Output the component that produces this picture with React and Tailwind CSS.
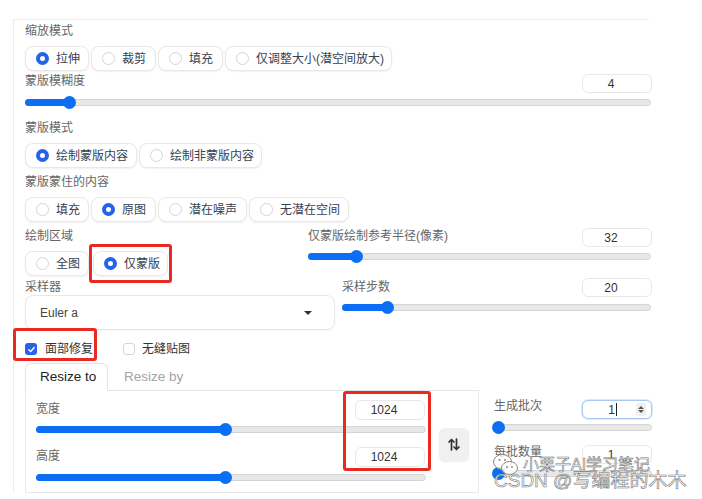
const font = "font-['Liberation_Sans','Noto_Sans_CJK_SC',sans-serif]";

function Radio({ label, checked, w }) {
  return (
    <div className={`flex h-[25px] shrink-0 items-center gap-[7px] overflow-hidden whitespace-nowrap rounded-lg border border-[#e8e8e8] bg-white pl-[10px] text-[12px] leading-[16px] text-[#374151] shadow-[0_1px_2px_rgba(0,0,0,0.06)] ${w}`}>
      {checked ? (
        <span className="h-[13px] w-[13px] shrink-0 rounded-full border-[4px] border-[#2563eb] bg-white" />
      ) : (
        <span className="h-[13px] w-[13px] shrink-0 rounded-full border border-[#d4d4d8] bg-white" />
      )}
      <span>{label}</span>
    </div>
  );
}

function Label({ children, className = "" }) {
  return <div className={`text-[12px] leading-[16px] text-[#666] ${className}`}>{children}</div>;
}

function NumBox({ value, className = "" }) {
  return (
    <div className={`flex h-[19px] w-[70px] items-center justify-center rounded-md border border-[#e8e8e8] bg-white pr-[12px] text-[12px] leading-[16px] text-[#333] ${className}`}>
      {value}
    </div>
  );
}

function Track({ fill, thumb }) {
  return (
    <div className="relative h-[13px] w-full">
      <div className="absolute left-0 right-0 top-[3px] h-[7px] rounded-full border border-[#d4d4d4] bg-[#e8e8e8]" />
      <div className={`absolute left-0 top-[3px] h-[7px] rounded-full bg-[#0b6ef3] ${fill}`} />
      <div className={`absolute top-0 h-[13px] w-[13px] rounded-full bg-[#0b6ef3] ${thumb}`} />
    </div>
  );
}

function RedBox({ className }) {
  return <div className={`pointer-events-none absolute rounded-[3px] border-[3px] border-[#e82a22] ${className}`} />;
}

export default function App() {
  return (
    <div className={`relative h-[499px] w-[702px] overflow-hidden bg-white ${font}`}>
      <div className="ml-[13px] mt-[19px] w-[636px] border-l border-t border-[#ececec] pl-[11px]">
        <div className="w-[627px]">
          <Label className="mt-[3px]">缩放模式</Label>
          <div className="mt-[7px] flex gap-[2px]">
            <Radio label="拉伸" checked w="w-[64px]" />
            <Radio label="裁剪" w="w-[65px]" />
            <Radio label="填充" w="w-[65px]" />
            <Radio label="仅调整大小(潜空间放大)" w="w-[167px]" />
          </div>

          <div className="mt-[2px] flex items-start justify-between">
            <Label>蒙版模糊度</Label>
            <NumBox value="4" className="mt-[1px]" />
          </div>
          <div className="mt-[3px] w-[626px]">
            <Track fill="w-[44px]" thumb="left-[38px]" />
          </div>

          <Label className="mt-[11px]">蒙版模式</Label>
          <div className="mt-[7px] flex gap-[2px]">
            <Radio label="绘制蒙版内容" checked w="w-[112px]" />
            <Radio label="绘制非蒙版内容" w="w-[123px]" />
          </div>

          <Label className="mt-[6px]">蒙版蒙住的内容</Label>
          <div className="mt-[7px] flex gap-[2px]">
            <Radio label="填充" w="w-[64px]" />
            <Radio label="原图" checked w="w-[65px]" />
            <Radio label="潜在噪声" w="w-[89px]" />
            <Radio label="无潜在空间" w="w-[100px]" />
          </div>

          <div className="mt-[6px] flex">
            <div className="w-[283px]">
              <Label>绘制区域</Label>
              <div className="mt-[7px] flex gap-[4px]">
                <Radio label="全图" w="w-[64px]" />
                <Radio label="仅蒙版" checked w="w-[75px]" />
              </div>
            </div>
            <div className="w-[344px]">
              <div className="flex items-start justify-between">
                <Label>仅蒙版绘制参考半径(像素)</Label>
                <NumBox value="32" />
              </div>
              <div className="mt-[3px] w-[343px]">
                <Track fill="w-[48px]" thumb="left-[42px]" />
              </div>
            </div>
          </div>

          <div className="mt-[2px] flex">
            <div className="w-[310px]">
              <Label className="mt-[1px]">采样器</Label>
              <div className="flex h-[35px] items-center justify-between rounded-lg border border-[#e8e8e8] bg-white pl-[14px] pr-[22px] text-[12px] text-[#444] shadow-[0_1px_2px_rgba(0,0,0,0.04)]">
                <span>Euler a</span>
                <span className="h-0 w-0 border-x-[4px] border-t-[4px] border-x-transparent border-t-[#333]" />
              </div>
            </div>
            <div className="ml-[7px] w-[310px]">
              <div className="flex items-start justify-between">
                <Label className="mt-[1px]">采样步数</Label>
                <NumBox value="20" />
              </div>
              <div className="mt-[4px] w-[309px]">
                <Track fill="w-[45px]" thumb="left-[39px]" />
              </div>
            </div>
          </div>

          <div className="mt-[11px] flex h-[16px] items-center text-[12px] text-[#333]">
            <span className="flex h-[12px] w-[12px] items-center justify-center rounded-[3px] bg-[#2563eb]">
              <svg width="9" height="9" viewBox="0 0 10 10" fill="none">
                <path d="M2 5.2 4.1 7.2 8 2.8" stroke="white" strokeWidth="1.6" strokeLinecap="round" strokeLinejoin="round" />
              </svg>
            </span>
            <span className="ml-[8px]">面部修复</span>
            <span className="ml-[30px] h-[12px] w-[12px] rounded-[3px] border border-[#d4d4d8] bg-white" />
            <span className="ml-[7px]">无缝贴图</span>
          </div>

          <div className="mt-[7px] flex h-[27px] w-[454px] items-end text-[13.5px]">
            <div className="flex h-[28px] w-[83px] items-center rounded-t-md border border-b-0 border-[#e5e5e5] bg-white pl-[14px] text-[#222]">Resize to</div>
            <div className="flex h-[27px] flex-1 items-center border-b border-[#e5e5e5] pl-[16px] text-[#a3a3a3]">Resize by</div>
          </div>

          <div className="flex">
            <div className="flex h-[102px] w-[454px] items-center border-x border-b border-[#e8e8e8] pl-[10px]">
              <div className="w-[390px]">
                <div className="flex items-start justify-between">
                  <Label className="mt-[1px]">宽度</Label>
                  <NumBox value="1024" className="mr-[1px] h-[20px]" />
                </div>
                <div className="mt-[3px]">
                  <Track fill="w-[189px]" thumb="left-[183px]" />
                </div>
                <div className="mt-[11px] flex items-start justify-between">
                  <Label className="mt-[1px]">高度</Label>
                  <NumBox value="1024" className="mr-[1px] h-[20px]" />
                </div>
                <div className="mt-[4px]">
                  <Track fill="w-[189px]" thumb="left-[183px]" />
                </div>
              </div>
              <div className="ml-[13px] mt-[6px] flex h-[33px] w-[30px] items-center justify-center rounded-md bg-[#f0f0f1] shadow-[0_1px_2px_rgba(0,0,0,0.08)]">
                <svg width="12" height="13" viewBox="0 0 12 13" fill="none" stroke="#333" strokeWidth="1.7" strokeLinecap="round" strokeLinejoin="round">
                  <path d="M3.5 12V1.5M1 4l2.5-2.5L6 4" />
                  <path d="M8.5 1v10.5M6 9l2.5 2.5L11 9" />
                </svg>
              </div>
            </div>

            <div className="ml-[15px] w-[158px] pt-[9px]">
              <div className="flex items-start justify-between">
                <Label className="mt-[-2px]">生成批次</Label>
                <div className="flex h-[19px] w-[70px] items-center justify-end rounded-md border border-[#a9c8f5] bg-white pr-[5px] text-[12px] text-[#333] shadow-[0_0_0_1px_rgba(147,197,253,0.35)]">
                  <span>1</span>
                  <span className="ml-[1px] h-[13px] w-px bg-[#222]" />
                  <span className="ml-[19px] flex h-[13px] w-[10px] flex-col items-center justify-center gap-[1px] rounded-[2px] bg-[#efefef]">
                    <span className="h-0 w-0 border-x-[3px] border-b-[3px] border-x-transparent border-b-[#555]" />
                    <span className="h-0 w-0 border-x-[3px] border-t-[3px] border-x-transparent border-t-[#555]" />
                  </span>
                </div>
              </div>
              <div className="mt-[2px]">
                <Track fill="w-[5px]" thumb="left-[-2px]" />
              </div>
              <div className="mt-[11px] flex items-start justify-between">
                <Label className="mt-[-1px]">每批数量</Label>
                <NumBox value="1" />
              </div>
              <div className="mt-[3px]">
                <Track fill="w-[5px]" thumb="left-[-2px]" />
              </div>
            </div>
          </div>
        </div>
      </div>

      <RedBox className="left-[89px] top-[244px] h-[39px] w-[83px]" />
      <RedBox className="left-[13px] top-[328px] h-[33px] w-[84px]" />
      <RedBox className="left-[343px] top-[391px] h-[80px] w-[88px]" />

      <div className="pointer-events-none absolute left-[492px] top-[453px] flex items-center">
        <svg width="28" height="24" viewBox="0 0 28 24" fill="rgba(255,255,255,0.75)" stroke="#8a8a8a" strokeWidth="1">
          <ellipse cx="10.5" cy="9" rx="9" ry="7.5" />
          <ellipse cx="17.5" cy="15" rx="8" ry="6.5" />
          <circle cx="7.5" cy="7" r="1" fill="#8a8a8a" stroke="none" />
          <circle cx="13" cy="7" r="1" fill="#8a8a8a" stroke="none" />
          <circle cx="15" cy="14" r="0.9" fill="#8a8a8a" stroke="none" />
          <circle cx="20" cy="14" r="0.9" fill="#8a8a8a" stroke="none" />
        </svg>
        <span className="ml-[3px] text-[16px] leading-[18px] text-white/80 [-webkit-text-stroke:0.6px_#777]">小栗子AI学习笔记</span>
      </div>
      <div className="pointer-events-none absolute left-[494px] top-[470px] text-[19px] leading-[22px] text-white/80 [-webkit-text-stroke:0.6px_#777]">
        CSDN @写编程的木木
      </div>
    </div>
  );
}
